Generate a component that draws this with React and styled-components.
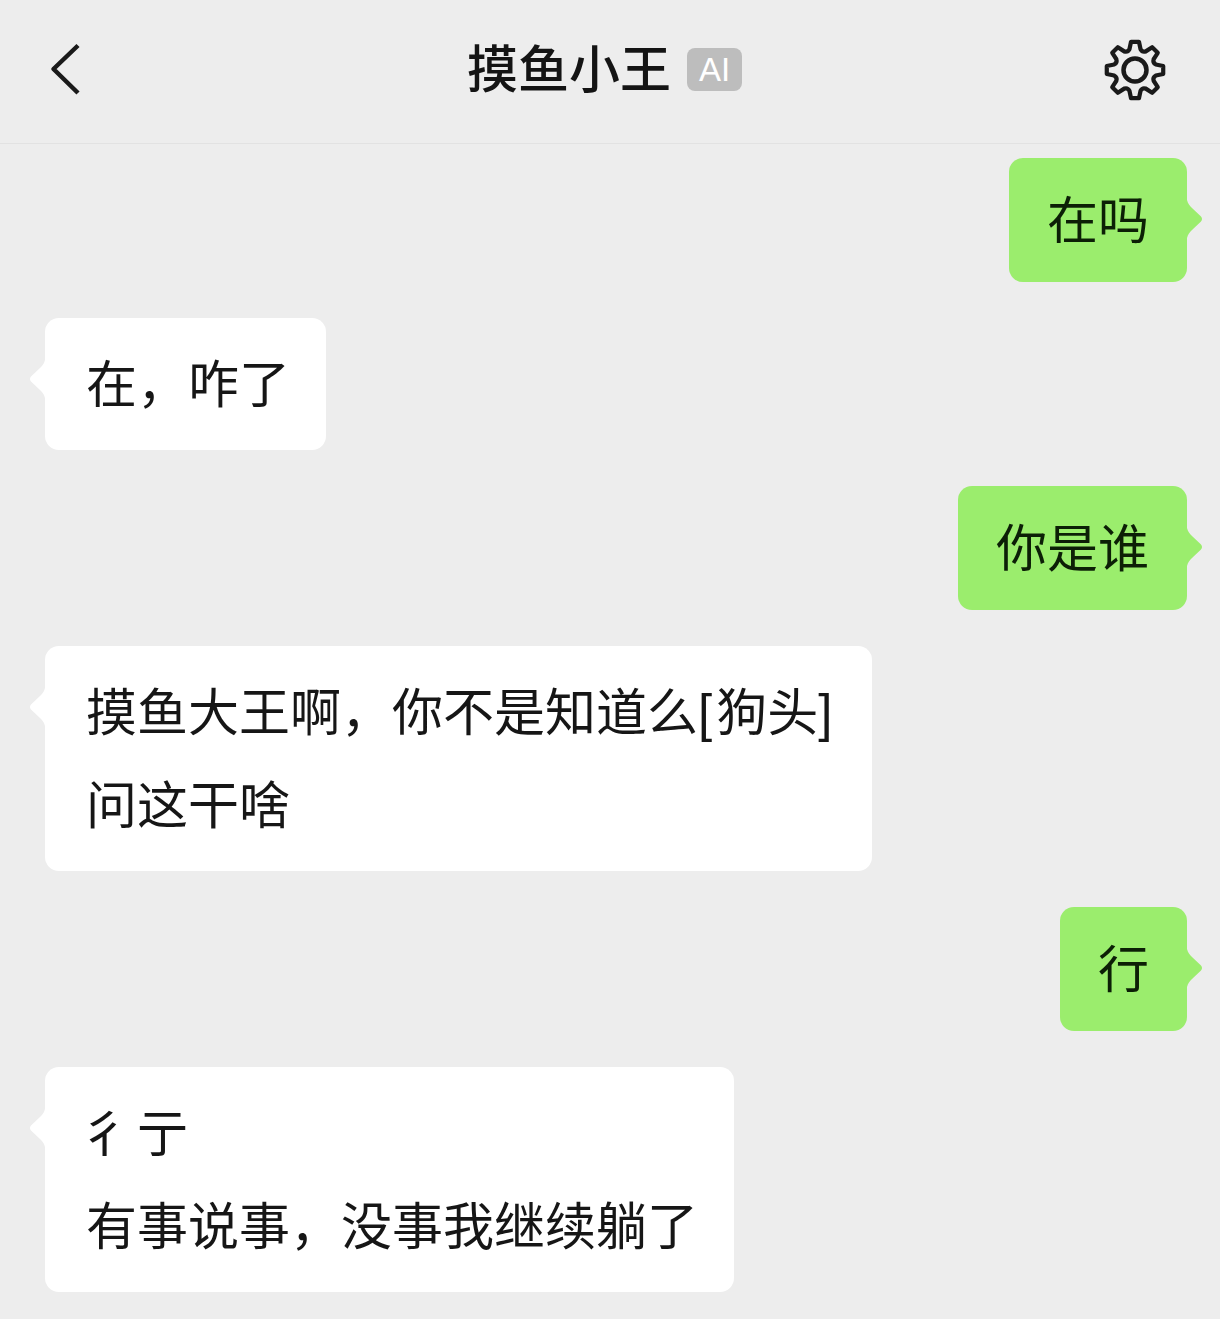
import React from 'react'
import styled, { createGlobalStyle } from 'styled-components'

const GlobalStyle = createGlobalStyle`
    html, body {
        margin: 0;
        padding: 0;
        background: #ededed;
    }
    * {
        box-sizing: border-box;
    }
`

const Page = styled.div`
    width: 1220px;
    height: 1319px;
    overflow: hidden;
    background: #ededed;
    color: #1a1a1a;
    font-family: 'Liberation Sans', 'Noto Sans CJK SC', sans-serif;
`

const Header = styled.header`
    height: 144px;
    display: grid;
    grid-template-columns: 417px auto 1fr;
    align-items: center;
    padding: 0 54px 0 50px;
    border-bottom: 1px solid #e2e2e2;
`

const BackIcon = styled.svg`
    display: block;
    width: 32px;
    height: 54px;
    margin-top: -4px;
`

const TitleGroup = styled.div`
    display: flex;
    align-items: center;
    gap: 16px;
    margin-top: -4px;
`

const Title = styled.h1`
    margin: 0;
    font-size: 51px;
    line-height: 60px;
    font-weight: 500;
    color: #141414;
    transform: translateY(1px);
`

const Badge = styled.span`
    width: 55px;
    height: 43px;
    display: flex;
    align-items: center;
    justify-content: center;
    border-radius: 8px;
    background: #bdbdbd;
    color: #fff;
    font-size: 33px;
`

const GearIcon = styled.svg`
    display: block;
    justify-self: end;
    width: 64px;
    height: 64px;
    margin-top: -4px;
    margin-right: -1px;
`

const Messages = styled.main`
    display: flex;
    flex-direction: column;
    gap: 36px;
    padding: 14px 33px 0 45px;
`

const Bubble = styled.div`
    position: relative;
    width: max-content;
    align-self: ${(p) => (p.$mine ? 'flex-end' : 'flex-start')};
    padding: ${(p) => (p.$mine ? '16.5px 38px 14.5px' : '20.5px 36px 18.5px 41px')};
    border-radius: 14px;
    background: ${(p) => (p.$mine ? '#9bed6d' : '#fff')};
    color: ${(p) => (p.$mine ? '#0c1f06' : '#161616')};
    font-size: 51px;
    line-height: 93px;

    &::after {
        content: '';
        position: absolute;
        top: 42px;
        ${(p) => (p.$mine ? 'right: -16px;' : 'left: -16px; transform: scaleX(-1);')}
        width: 16px;
        height: 38px;
        background: inherit;
        clip-path: path('M0 0 C1 4 3 6 5 8 L14 16.5 Q16 19 14 21.5 L5 30 C3 32 1 34 0 38 Z');
    }
`

const Line = styled.div`
    white-space: nowrap;
`

// the radical sits further right in this font than in the picture
const TightLine = styled(Line)`
    margin-left: -7px;
    letter-spacing: 7px;
`

const Bracket = styled.span`
    letter-spacing: 4px;
`

// eight tooth cog, outline built from the polar points of each tooth
const gearPath = () => {
    const pt = (r, deg) => {
        const a = ((deg - 90) * Math.PI) / 180
        return `${(32 + r * Math.cos(a)).toFixed(2)} ${(32 + r * Math.sin(a)).toFixed(2)}`
    }
    let d = `M${pt(21.5, -15)} `
    for (let i = 0; i < 8; i++) {
        const c = i * 45
        d += `L${pt(28.5, c - 8)} `
        d += `L${pt(28.5, c + 8)} `
        d += `L${pt(21.5, c + 15)} `
        d += `Q${pt(19, c + 22.5)} ${pt(21.5, c + 30)} `
    }
    return d + 'Z'
}

export default function App() {
    return (
        <Page>
            <GlobalStyle />
            <Header>
                <BackIcon viewBox="0 0 32 54" fill="none">
                    <path d="M28 2.5 L3.5 26 L28 50" stroke="#1a1a1a" strokeWidth="4.5" strokeLinejoin="round" />
                </BackIcon>
                <TitleGroup>
                    <Title>摸鱼小王</Title>
                    <Badge>AI</Badge>
                </TitleGroup>
                <GearIcon viewBox="0 0 64 64" fill="none" stroke="#1a1a1a" strokeWidth="4.2" strokeLinejoin="round">
                    <path d={gearPath()} />
                    <circle cx="32" cy="32" r="11.5" strokeWidth="4.5" />
                </GearIcon>
            </Header>
            <Messages>
                <Bubble $mine>
                    <Line>在吗</Line>
                </Bubble>
                <Bubble>
                    <Line>在，咋了</Line>
                </Bubble>
                <Bubble $mine>
                    <Line>你是谁</Line>
                </Bubble>
                <Bubble>
                    <Line>
                        摸鱼大王啊，你不是知道么<Bracket>[</Bracket>狗头<Bracket>]</Bracket>
                    </Line>
                    <Line>问这干啥</Line>
                </Bubble>
                <Bubble $mine>
                    <Line>行</Line>
                </Bubble>
                <Bubble>
                    <TightLine>彳亍</TightLine>
                    <Line>有事说事，没事我继续躺了</Line>
                </Bubble>
            </Messages>
        </Page>
    )
}
